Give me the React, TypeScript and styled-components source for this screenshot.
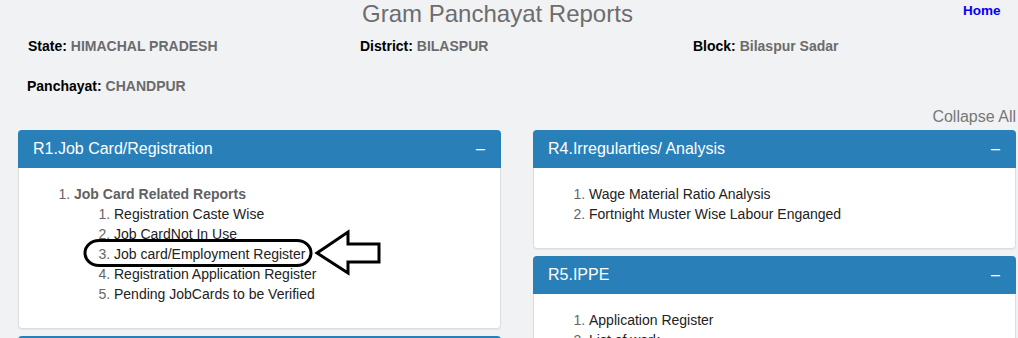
import React from "react";
import styled, { createGlobalStyle } from "styled-components";

const GlobalStyle = createGlobalStyle`
  html, body { margin: 0; padding: 0; overflow: hidden; }
  body {
    background: #f1f2f4;
    font-family: "Liberation Sans", Arial, sans-serif;
    font-size: 14px;
    color: #333;
  }
`;

const Page = styled.div`
  position: relative;
  width: 1018px;
`;

const TopBar = styled.header`
  display: flex;
  align-items: flex-start;
`;

const Title = styled.h1`
  flex: 1;
  margin: 0;
  padding-left: 32px;
  text-align: center;
  font-size: 24px;
  line-height: 27px;
  font-weight: normal;
  color: #6d6d6d;
`;

const HomeLink = styled.a`
  width: 55px;
  box-sizing: border-box;
  padding-top: 3px;
  font-size: 13.5px;
  line-height: 16px;
  font-weight: bold;
  color: #0000ff;
  text-decoration: none;
`;

const InfoRow = styled.div<{ $indent: number }>`
  display: grid;
  grid-template-columns: 332px 333px auto;
  padding-left: ${(p) => p.$indent}px;
  margin-top: ${(p) => (p.$indent === 28 ? 9 : 20)}px;
  line-height: 20px;
  font-size: 14px;
  font-weight: bold;
`;

const Label = styled.span`
  color: #000;
`;

const Value = styled.span`
  color: #6b6b6b;
`;

const CollapseBar = styled.div`
  margin-top: 11px;
  padding-right: 2px;
  text-align: right;
  font-size: 16px;
  line-height: 20px;
  color: #777;
`;

const Columns = styled.div`
  display: grid;
  grid-template-columns: 1fr 1fr;
  column-gap: 32px;
  padding: 0 2px 0 18px;
  margin-top: 3px;
  align-items: start;
`;

const Column = styled.div`
  display: flex;
  flex-direction: column;
`;

const Panel = styled.section`
  background: #fff;
  border: 1px solid #ddd;
  border-radius: 4px;
  box-shadow: 0 1px 1px rgba(0, 0, 0, 0.05);
  margin-bottom: 7px;
`;

const PanelHeading = styled.div`
  display: flex;
  justify-content: space-between;
  align-items: flex-start;
  box-sizing: border-box;
  height: 38px;
  margin: -1px -1px 0;
  padding: 10px 15px 10px 15px;
  background: #2980b9;
  border-radius: 4px 4px 0 0;
  color: #fff;
  font-size: 16px;
  line-height: 18px;
`;

const Toggle = styled.span`
  padding-right: 1px;
`;

const PanelBody = styled.div`
  padding: 16px 15px 14px;
`;

const List = styled.ol<{ $nested?: boolean }>`
  margin: ${(p) => (p.$nested ? "0" : "0 0 10px")};
  padding-left: 40px;
  line-height: 20px;
  font-size: 14px;
  color: #666;
`;

const Item = styled.li``;

const GroupTitle = styled.b`
  color: #616161;
`;

const ReportLink = styled.a`
  color: #222;
  text-decoration: none;
`;

const Annotation = styled.svg`
  position: absolute;
  top: 0;
  left: 0;
  pointer-events: none;
`;

type PanelData = { title: string; items: string[] };

const ReportPanel: React.FC<{ title: string; children: React.ReactNode }> = ({ title, children }) => (
  <Panel>
    <PanelHeading>
      <span>{title}</span>
      <Toggle>–</Toggle>
    </PanelHeading>
    <PanelBody>{children}</PanelBody>
  </Panel>
);

const SimpleList: React.FC<{ items: string[] }> = ({ items }) => (
  <List>
    {items.map((t) => (
      <Item key={t}>
        <ReportLink href="#">{t}</ReportLink>
      </Item>
    ))}
  </List>
);

const rightPanels: PanelData[] = [
  { title: "R4.Irregularties/ Analysis", items: ["Wage Material Ratio Analysis", "Fortnight Muster Wise Labour Enganged"] },
  { title: "R5.IPPE", items: ["Application Register", "List of work", "Work Register"] },
];

const jobCardItems = [
  "Registration Caste Wise",
  "Job CardNot In Use",
  "Job card/Employment Register",
  "Registration Application Register",
  "Pending JobCards to be Verified",
];

export default function App() {
  return (
    <>
      <GlobalStyle />
      <Page>
        <TopBar>
          <Title>Gram Panchayat Reports</Title>
          <HomeLink href="#">Home</HomeLink>
        </TopBar>
        <InfoRow $indent={28}>
          <span>
            <Label>State:</Label> <Value>HIMACHAL PRADESH</Value>
          </span>
          <span>
            <Label>District:</Label> <Value>BILASPUR</Value>
          </span>
          <span>
            <Label>Block:</Label> <Value>Bilaspur Sadar</Value>
          </span>
        </InfoRow>
        <InfoRow $indent={27}>
          <span>
            <Label>Panchayat:</Label> <Value>CHANDPUR</Value>
          </span>
        </InfoRow>
        <CollapseBar>Collapse All</CollapseBar>
        <Columns>
          <Column>
            <ReportPanel title="R1.Job Card/Registration">
              <List>
                <Item>
                  <GroupTitle>Job Card Related Reports</GroupTitle>
                  <List $nested>
                    {jobCardItems.map((t) => (
                      <Item key={t}>
                        <ReportLink href="#">{t}</ReportLink>
                      </Item>
                    ))}
                  </List>
                </Item>
              </List>
            </ReportPanel>
            <ReportPanel title="R2.Demand, Allocation &amp; Musteroll">
              <SimpleList items={["Demand Register"]} />
            </ReportPanel>
          </Column>
          <Column>
            {rightPanels.map((p) => (
              <ReportPanel key={p.title} title={p.title}>
                <SimpleList items={p.items} />
              </ReportPanel>
            ))}
          </Column>
        </Columns>
        <Annotation width="1018" height="338" viewBox="0 0 1018 338">
          <rect x="85" y="240.5" width="226" height="25" rx="14" ry="12.5" fill="none" stroke="#000" strokeWidth="3" />
          <polygon
            points="317,253 348,232 348,244 379,244 379,262 348,262 348,273"
            fill="none"
            stroke="#000"
            strokeWidth="3"
            strokeLinejoin="miter"
          />
        </Annotation>
      </Page>
    </>
  );
}
